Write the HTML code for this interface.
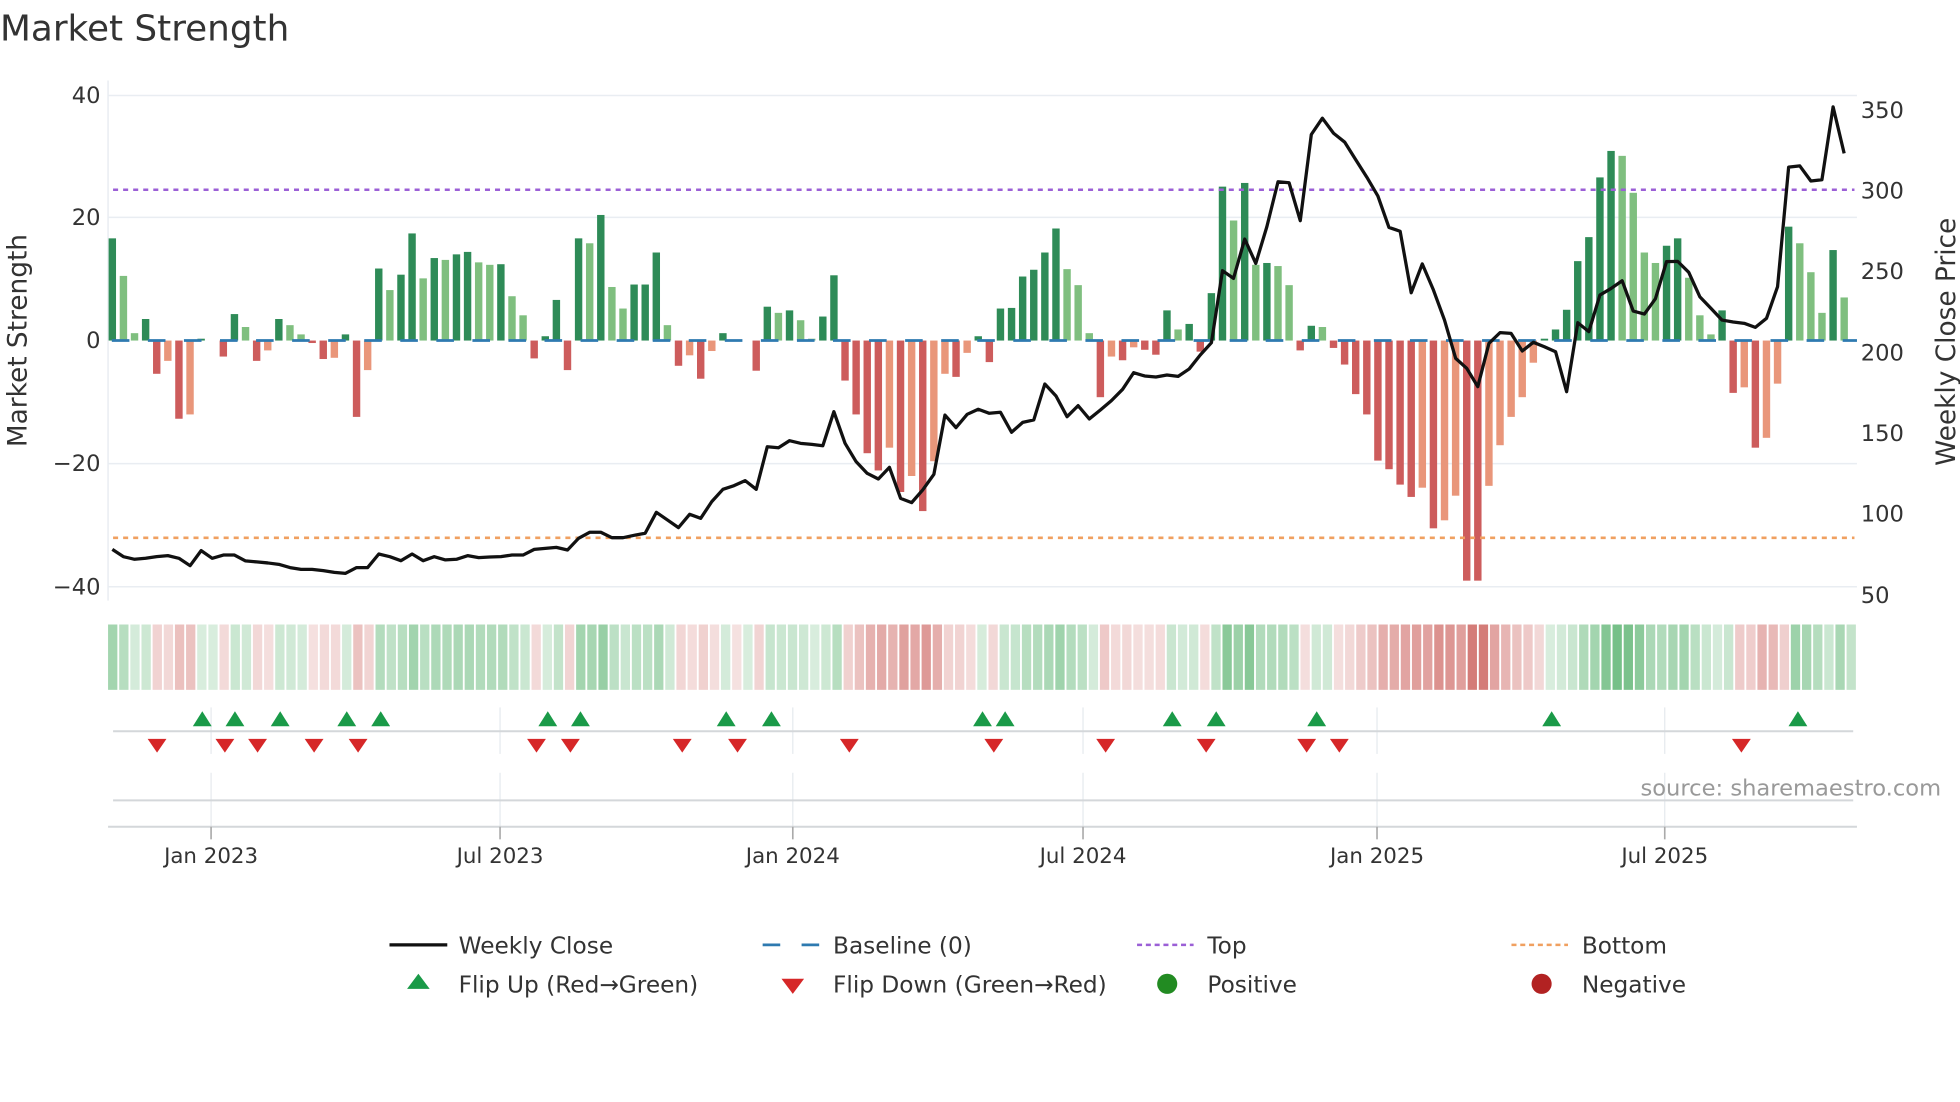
<!DOCTYPE html>
<html><head><meta charset="utf-8">
<style>
html,body{margin:0;padding:0;background:#fff;width:1960px;height:1102px;overflow:hidden}
svg{display:block}
text{font-family:"DejaVu Sans","Liberation Sans",sans-serif;fill:#333}
</style></head><body>
<svg id="s" width="1960" height="1102" viewBox="0 0 1560 877" xmlns="http://www.w3.org/2000/svg">
<rect width="1560" height="877" fill="#fff"/>
<text x="0" y="32" font-size="28.5">Market Strength</text>
<g stroke="#e9edf2" stroke-width="1.2">
<line x1="86" y1="76" x2="1478" y2="76"/><line x1="86" y1="173" x2="1478" y2="173"/>
<line x1="86" y1="369" x2="1478" y2="369"/><line x1="86" y1="467" x2="1478" y2="467"/>
<line x1="86" y1="64" x2="86" y2="478"/>
</g>
<g font-size="18" text-anchor="end">
<text x="80" y="82">40</text><text x="80" y="179">20</text><text x="80" y="277">0</text>
<text x="80" y="375">−20</text><text x="80" y="473">−40</text>
</g>
<g font-size="18">
<text x="1481" y="94">350</text><text x="1481" y="158">300</text><text x="1481" y="222">250</text>
<text x="1481" y="287">200</text><text x="1481" y="351">150</text><text x="1481" y="415">100</text><text x="1481" y="480">50</text>
</g>
<text font-size="21" text-anchor="middle" transform="translate(21,271) rotate(-90)">Market Strength</text>
<text font-size="21" text-anchor="middle" transform="translate(1556,272) rotate(-90)">Weekly Close Price</text>
<g id="bars"></g>
<line x1="89" y1="271" x2="1478" y2="271" stroke="#2e7ab0" stroke-width="2.2" stroke-dasharray="14 14.7"/>
<line x1="90" y1="151" x2="1476" y2="151" stroke="#9b5fd6" stroke-width="2" stroke-dasharray="4 4"/>
<line x1="90" y1="428" x2="1476" y2="428" stroke="#f0a060" stroke-width="2" stroke-dasharray="4 4"/>
<polyline id="price" fill="none" stroke="#111" stroke-width="2.6" stroke-linejoin="round"/>
<g id="strip"></g>
<g stroke="#e6eaee" stroke-width="1">
<line x1="168" y1="563" x2="168" y2="600"/><line x1="398" y1="563" x2="398" y2="600"/><line x1="631" y1="563" x2="631" y2="600"/><line x1="862" y1="563" x2="862" y2="600"/><line x1="1096" y1="563" x2="1096" y2="600"/><line x1="1325" y1="563" x2="1325" y2="600"/>
<line x1="168" y1="615" x2="168" y2="660"/><line x1="398" y1="615" x2="398" y2="660"/><line x1="631" y1="615" x2="631" y2="660"/><line x1="862" y1="615" x2="862" y2="660"/><line x1="1096" y1="615" x2="1096" y2="660"/><line x1="1325" y1="615" x2="1325" y2="660"/>
</g>
<line x1="90" y1="582" x2="1475" y2="582" stroke="#d4d7da" stroke-width="1.6"/>
<line x1="90" y1="637" x2="1475" y2="637" stroke="#d4d7da" stroke-width="1.6"/>
<line x1="86" y1="658" x2="1478" y2="658" stroke="#d4d7da" stroke-width="1.6"/>
<g stroke="#aaa" stroke-width="1.3">
<line x1="168" y1="658" x2="168" y2="668"/><line x1="398" y1="658" x2="398" y2="668"/><line x1="631" y1="658" x2="631" y2="668"/><line x1="862" y1="658" x2="862" y2="668"/><line x1="1096" y1="658" x2="1096" y2="668"/><line x1="1325" y1="658" x2="1325" y2="668"/>
</g>
<g id="tri"></g>
<text x="1545" y="633" font-size="18" text-anchor="end" style="fill:#999">source: sharemaestro.com</text>
<g font-size="17" text-anchor="middle">
<text x="168" y="687">Jan 2023</text><text x="398" y="687">Jul 2023</text><text x="631" y="687">Jan 2024</text>
<text x="862" y="687">Jul 2024</text><text x="1096" y="687">Jan 2025</text><text x="1325" y="687">Jul 2025</text>
</g>
<g font-size="18.5">
<line x1="310" y1="752" x2="356" y2="752" stroke="#111" stroke-width="2.6"/>
<text x="365" y="759">Weekly Close</text>
<line x1="607" y1="752" x2="652" y2="752" stroke="#2e7ab0" stroke-width="2.2" stroke-dasharray="14 17"/>
<text x="663" y="759">Baseline (0)</text>
<line x1="905" y1="752" x2="950" y2="752" stroke="#9b5fd6" stroke-width="2" stroke-dasharray="4 3"/>
<text x="961" y="759">Top</text>
<line x1="1203" y1="752" x2="1248" y2="752" stroke="#f0a060" stroke-width="2" stroke-dasharray="4 3"/>
<text x="1259" y="759">Bottom</text>
<polygon points="324,787 342,787 333,775" fill="#1a9a48"/>
<text x="365" y="790">Flip Up (Red→Green)</text>
<polygon points="622,779 640,779 631,791" fill="#d62728"/>
<text x="663" y="790">Flip Down (Green→Red)</text>
<circle cx="929" cy="783" r="8" fill="#228b22"/>
<text x="961" y="790">Positive</text>
<circle cx="1227" cy="783" r="8" fill="#b22222"/>
<text x="1259" y="790">Negative</text>
</g>
</svg>
<script>
var V=[16.6,10.5,1.2,3.5,-5.4,-3.3,-12.7,-12,0.3,0,-2.6,4.3,2.2,-3.3,-1.6,3.5,2.5,1,-0.4,-3,-2.8,1,-12.4,-4.8,11.7,8.2,10.7,17.4,10.1,13.4,13.1,14,14.4,12.7,12.3,12.4,7.2,4.1,-2.9,0.7,6.6,
-4.8,16.6,15.8,20.4,8.7,5.2,9.1,9.1,14.3,2.5,-4.1,-2.4,-6.2,-1.7,1.2,-0.1,0,-4.9,5.5,4.5,4.9,3.3,0.3,3.9,10.6,-6.5,-12,-18.3,-21.1,-17.4,-24.6,-22,-27.7,-19.6,-5.4,-5.9,-2,0.7,-3.5,
5.2,5.3,10.4,11.5,14.3,18.2,11.6,9,1.2,-9.2,-2.6,-3.2,-1.1,-1.5,-2.3,4.9,1.8,2.7,-1.8,7.7,25,19.5,25.6,12.3,12.6,12.1,9,-1.6,2.4,2.2,-1.2,-3.9,-8.7,-12,-19.5,-20.9,-23.4,-25.4,-23.9,-30.5,
-29.2,-25.2,-39,-39,-23.6,-17,-12.4,-9.2,-3.6,0.3,1.8,5,12.9,16.8,26.5,30.8,30,24,14.3,12.6,15.4,16.6,10.2,4.1,1,4.9,-8.5,-7.6,-17.4,-15.8,-7,18.5,15.8,11.1,4.5,14.7,7];
var O=[1108,1130,1138,1135,1130,1127,1135,1157,1112,1135,1125,1125,1143,1146,1149,1153,1163,1168,1168,1172,1177,1180,1163,1163,1122,1130,1142,1122,1142,1130,1140,1138,1127,1133,1131,1130,1125,1125,1108,1105,1102,
1110,1075,1057,1057,1073,1073,1066,1060,997,1020,1043,1003,1015,965,928,917,902,928,800,803,782,790,793,797,695,790,845,880,897,862,955,968,930,883,705,743,703,688,700,
697,757,727,720,612,648,710,677,717,690,662,628,578,588,591,585,589,567,525,488,272,295,177,250,140,5,8];
var P=O.map(function(o){return 143.24+o*0.26527});
P=P.concat([175.6,107,94,106,113,127,141,156,181,184,233,210]);
[330,420,535,565,620,490,458,460,513,487,500,515,635,428,455,345,325,302,393,402,356,245,244,277,350,385,420,426,430,442,415,320].forEach(function(o){P.push(143.24+o*0.26527)});
P=P.concat([133,132,144,143,85,122]);
var NS="http://www.w3.org/2000/svg";
function el(n,a,p){var e=document.createElementNS(NS,n);for(var k in a)e.setAttribute(k,a[k]);p.appendChild(e);return e}
var bars=document.getElementById("bars"),strip=document.getElementById("strip");
var C={d:"#2e8b57",l:"#7fbf7f",r:"#cd5c5c",s:"#e9967a"};
var pts=[];
for(var i=0;i<V.length;i++){
 var x=89.4+i*8.836,v=V[i],y0=271,y1=271-4.9*v,pv=i>0?V[i-1]:0;
 var t;
 if(v>=0){t=(v>=pv)?"d":"l";}else{t=(v<=pv)?"r":"s";}
 if(Math.abs(v)>0.05)el("rect",{x:x-2.95,y:Math.min(y0,y1),width:5.9,height:Math.abs(y1-y0),fill:C[t]},bars);
 var col,a;
 if(v>=0){a=0.2+0.5*Math.min(v/31,1);col="rgba(60,165,85,"+a.toFixed(2)+")"}
 else{a=0.16+0.55*Math.min(-v/39,1);col="rgba(195,70,65,"+a.toFixed(2)+")"}
 el("rect",{x:(86+i*8.87).toFixed(2),y:497,width:7.4,height:52,fill:col},strip);
 if(i<P.length)pts.push(x.toFixed(1)+","+P[i].toFixed(1));
}
document.getElementById("price").setAttribute("points",pts.join(" "));
var tri=document.getElementById("tri");
[161,187,223,276,303,436,462,578,614,782,800,933,968,1048,1235,1431].forEach(function(x){el("polygon",{points:(x-7.5)+",578 "+(x+7.5)+",578 "+x+",566",fill:"#1a9a48"},tri)});
[125,179,205,250,285,427,454,543,587,676,791,880,960,1040,1066,1386].forEach(function(x){el("polygon",{points:(x-7.5)+",588 "+(x+7.5)+",588 "+x+",599",fill:"#d62728"},tri)});
</script>
</body></html>
